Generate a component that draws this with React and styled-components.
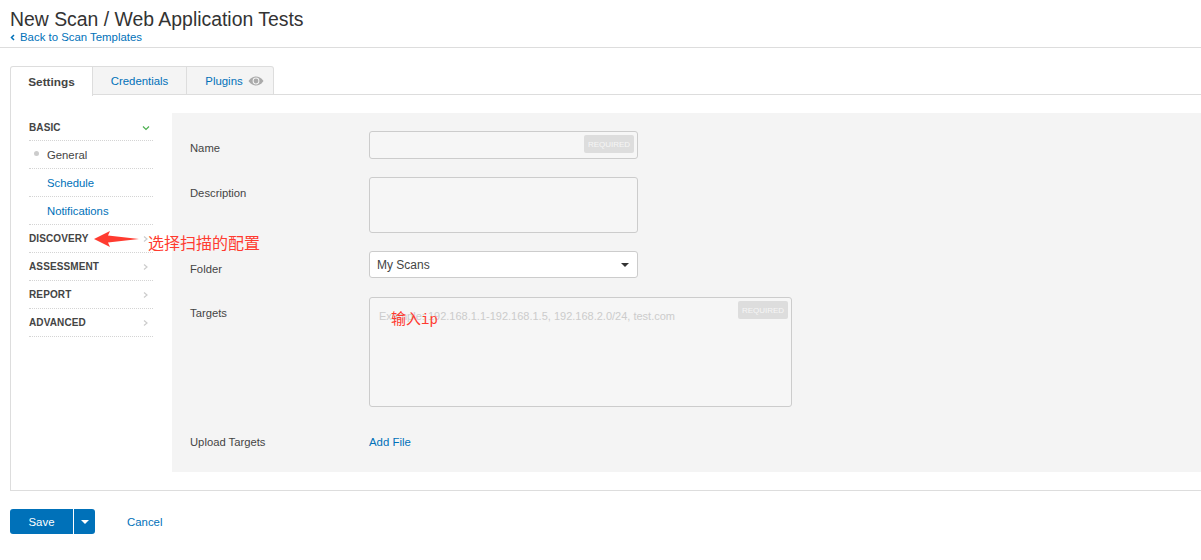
import React from "react";
import styled, { createGlobalStyle } from "styled-components";

const GlobalStyle = createGlobalStyle`
  html, body {
    margin: 0;
    padding: 0;
    background: #fff;
    font-family: "Liberation Sans", Arial, sans-serif;
    color: #444;
    overflow: hidden;
  }
`;

const Page = styled.div`
  position: relative;
  width: 1201px;
  height: 560px;
  overflow: hidden;
`;

const Header = styled.header`
  padding: 9px 10px 0;
  box-sizing: border-box;
  border-bottom: 1px solid #ddd;
  height: 48px;
`;

const Title = styled.h1`
  margin: 0;
  font-size: 19.4px;
  line-height: 21px;
  font-weight: normal;
  color: #333;
`;

const BackLink = styled.a`
  display: flex;
  align-items: center;
  gap: 5px;
  font-size: 11.4px;
  line-height: 14px;
  color: #0071b9;
`;

const Tabs = styled.div`
  display: flex;
  margin: 18px 0 0 10px;
  height: 28px;
  position: relative;
  z-index: 1;
`;

const Tab = styled.div`
  display: flex;
  align-items: center;
  justify-content: center;
  gap: 5px;
  box-sizing: border-box;
  width: ${(p) => p.$width}px;
  height: ${(p) => (p.$active ? 30 : 29)}px;
  padding-left: ${(p) => p.$pad || 0}px;
  border: 1px solid #ddd;
  border-left-width: ${(p) => (p.$first ? 1 : 0)}px;
  border-bottom-width: ${(p) => (p.$active ? 0 : 1)}px;
  border-radius: ${(p) => (p.$first ? "3px 0 0 0" : p.$last ? "0 3px 0 0" : "0")};
  background: ${(p) => (p.$active ? "#fff" : "#f4f4f4")};
  color: ${(p) => (p.$active ? "#444" : "#0071b9")};
  font-size: ${(p) => (p.$active ? 11.8 : 11.4)}px;
  font-weight: ${(p) => (p.$active ? "bold" : "normal")};
`;

const Panel = styled.div`
  display: flex;
  margin-left: 10px;
  box-sizing: border-box;
  height: 397px;
  padding: 18px 0 18px 18px;
  border: 1px solid #ddd;
  border-right: 0;
`;

const Sidebar = styled.nav`
  width: 124px;
  margin-right: 19px;
  flex-shrink: 0;
`;

const SideRow = styled.div`
  display: flex;
  align-items: center;
  justify-content: space-between;
  box-sizing: border-box;
  height: 28px;
  padding-top: ${(p) => (p.$first ? 2 : 0)}px;
  padding-right: 3px;
  border-bottom: 1px dotted #d4d4d4;
`;

const Section = styled.span`
  font-size: 10px;
  font-weight: bold;
  letter-spacing: 0.12px;
  color: #444;
`;

const SubLabel = styled.span`
  display: flex;
  align-items: center;
  font-size: 11.3px;
  padding-left: 18px;
  position: relative;
  color: ${(p) => (p.$current ? "#444" : "#0071b9")};
`;

const Dot = styled.i`
  position: absolute;
  left: 5px;
  top: 2px;
  width: 5px;
  height: 5px;
  border-radius: 50%;
  background: #ccc;
`;

const FormArea = styled.div`
  flex: 1;
  background: #f4f4f4;
  padding: 18px;
`;

const FormRow = styled.div`
  display: flex;
  margin-bottom: ${(p) => p.$gap ?? 18}px;
`;

const Label = styled.label`
  display: block;
  width: 179px;
  flex-shrink: 0;
  font-size: 11.25px;
  line-height: 14px;
  padding-top: ${(p) => p.$top ?? 10}px;
  color: #444;
`;

const Field = styled.div`
  position: relative;
  box-sizing: border-box;
  width: ${(p) => p.$width}px;
  height: ${(p) => p.$height}px;
  background: #f6f6f6;
  border: 1px solid #ccc;
  border-radius: 3px;
`;

const Required = styled.span`
  position: absolute;
  top: 3px;
  right: 3px;
  width: 50px;
  height: 18px;
  line-height: 19px;
  text-align: center;
  border-radius: 2px;
  background: #ddd;
  color: #f6f6f6;
  font-size: 8px;
`;

const Placeholder = styled.div`
  padding: 11px 9px;
  font-size: 11px;
  line-height: 14px;
  color: #ccc;
`;

const Select = styled.div`
  display: flex;
  align-items: center;
  justify-content: space-between;
  box-sizing: border-box;
  width: 269px;
  height: 27px;
  padding: 1px 8px 0 7px;
  background: #fff;
  border: 1px solid #ccc;
  border-radius: 3px;
  font-size: 12px;
  color: #444;
`;

const Caret = styled.i`
  width: 0;
  height: 0;
  border-left: 4px solid transparent;
  border-right: 4px solid transparent;
  border-top: 4px solid ${(p) => p.$color || "#333"};
`;

const LinkText = styled.a`
  font-size: 11.4px;
  line-height: 14px;
  color: #0071b9;
`;

const Actions = styled.div`
  display: flex;
  align-items: center;
  margin: 18px 0 0 10px;
`;

const SaveButton = styled.div`
  display: flex;
  align-items: center;
  justify-content: center;
  width: 63px;
  height: 25px;
  background: #0071b9;
  color: #fff;
  font-size: 11.4px;
  border-radius: 3px 0 0 3px;
`;

const SaveMenu = styled.div`
  display: flex;
  align-items: center;
  justify-content: center;
  width: 21px;
  height: 25px;
  margin-left: 1px;
  background: #0071b9;
  border-radius: 0 3px 3px 0;
`;

const Cancel = styled(LinkText)`
  margin-left: 32px;
`;

const ArrowMark = styled.svg`
  position: absolute;
  left: 94px;
  top: 231px;
`;

const Note = styled.span`
  position: absolute;
  left: ${(p) => p.$left}px;
  top: ${(p) => p.$top}px;
  font-family: "Noto Sans CJK SC", sans-serif;
  font-size: ${(p) => p.$size}px;
  line-height: 18px;
  color: #ff3b30;
  white-space: nowrap;
`;

const NoteLatin = styled.span`
  font-family: "Liberation Mono", monospace;
  font-size: 14px;
`;

const Chevron = ({ open }) => (
  <svg width="8" height="6" viewBox="0 0 8 6">
    {open ? (
      <path d="M1 1.5l3 3 3-3" fill="none" stroke="#4cb050" strokeWidth="1.2" />
    ) : (
      <path d="M2 0.5l3 2.5-3 2.5" fill="none" stroke="#ccc" strokeWidth="1.2" />
    )}
  </svg>
);

const Eye = () => (
  <svg width="16" height="10" viewBox="0 0 16 10">
    <path d="M0.5 5C3 1.5 5.5 0.5 8 0.5S13 1.5 15.5 5C13 8.5 10.5 9.5 8 9.5S3 8.5 0.5 5Z" fill="#aaa" />
    <circle cx="8" cy="5" r="3.4" fill="#f4f4f4" />
    <circle cx="8" cy="5" r="2.4" fill="#aaa" />
  </svg>
);

const BackIcon = () => (
  <svg width="5" height="7" viewBox="0 0 5 7">
    <path d="M4 1L1.5 3.5 4 6" fill="none" stroke="#0071b9" strokeWidth="1.5" />
  </svg>
);

const sections = ["DISCOVERY", "ASSESSMENT", "REPORT", "ADVANCED"];

export default () => {
  return (
    <Page>
      <GlobalStyle />
      <Header>
        <Title>New Scan / Web Application Tests</Title>
        <BackLink>
          <BackIcon />
          Back to Scan Templates
        </BackLink>
      </Header>
      <Tabs>
        <Tab $width={83} $active $first>Settings</Tab>
        <Tab $width={94}>Credentials</Tab>
        <Tab $width={87} $pad={9} $last>
          Plugins <Eye />
        </Tab>
      </Tabs>
      <Panel>
        <Sidebar>
          <SideRow $first>
            <Section>BASIC</Section>
            <Chevron open />
          </SideRow>
          <SideRow>
            <SubLabel $current>
              <Dot />
              General
            </SubLabel>
          </SideRow>
          <SideRow>
            <SubLabel>Schedule</SubLabel>
          </SideRow>
          <SideRow>
            <SubLabel>Notifications</SubLabel>
          </SideRow>
          {sections.map((s) => (
            <SideRow key={s}>
              <Section>{s}</Section>
              <Chevron />
            </SideRow>
          ))}
        </Sidebar>
        <FormArea>
          <FormRow>
            <Label>Name</Label>
            <Field $width={269} $height={28}>
              <Required>REQUIRED</Required>
            </Field>
          </FormRow>
          <FormRow>
            <Label $top={9}>Description</Label>
            <Field $width={269} $height={56} />
          </FormRow>
          <FormRow $gap={19}>
            <Label $top={11}>Folder</Label>
            <Select>
              My Scans
              <Caret />
            </Select>
          </FormRow>
          <FormRow $gap={28}>
            <Label $top={9}>Targets</Label>
            <Field $width={423} $height={110}>
              <Placeholder>Example: 192.168.1.1-192.168.1.5, 192.168.2.0/24, test.com</Placeholder>
              <Required>REQUIRED</Required>
            </Field>
          </FormRow>
          <FormRow>
            <Label $top={0}>Upload Targets</Label>
            <LinkText>Add File</LinkText>
          </FormRow>
        </FormArea>
      </Panel>
      <Actions>
        <SaveButton>Save</SaveButton>
        <SaveMenu>
          <Caret $color="#fff" />
        </SaveMenu>
        <Cancel>Cancel</Cancel>
      </Actions>
      <ArrowMark width="46" height="16" viewBox="0 0 46 16">
        <path d="M0 8L16 0L14 4.5L45 8L14 11.5L16 16Z" fill="#ff3b30" />
      </ArrowMark>
      <Note $left={148} $top={233} $size={16}>选择扫描的配置</Note>
      <Note $left={391} $top={309} $size={15}>
        输入<NoteLatin>ip</NoteLatin>
      </Note>
    </Page>
  );
};
